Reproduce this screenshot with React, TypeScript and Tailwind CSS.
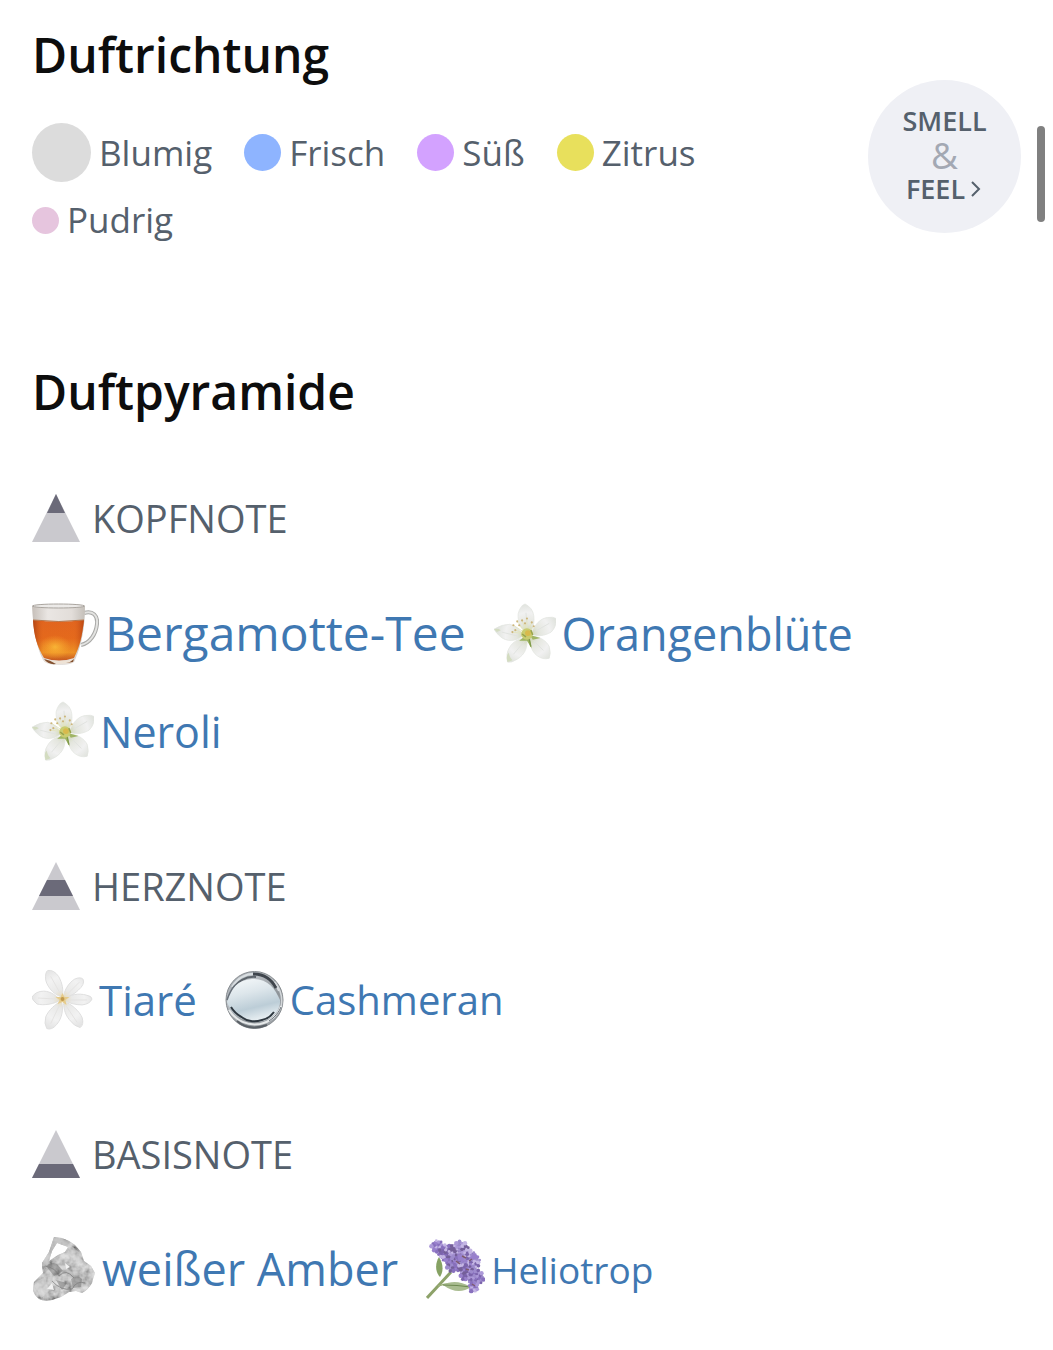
import React from 'react';

const accords = [
  { name: 'Blumig', dot: 'size-[59px] bg-[#dcdcdc]' },
  { name: 'Frisch', dot: 'size-[37px] bg-[#8eb4ff]' },
  { name: 'Süß', dot: 'size-[37px] bg-[#d3a2ff]' },
  { name: 'Zitrus', dot: 'size-[37px] bg-[#e8e05c]' },
  { name: 'Pudrig', dot: 'size-[27px] bg-[#e6c5de]' },
];

const TeaIcon = () => (
  <svg width="67" height="64" viewBox="0 0 67 64" className="shrink-0" aria-hidden="true">
    <defs>
      <linearGradient id="tea" x1="0" y1="0" x2="0" y2="1">
        <stop offset="0" stopColor="#e2651f" />
        <stop offset="0.45" stopColor="#e56a1c" />
        <stop offset="0.8" stopColor="#ee9426" />
        <stop offset="1" stopColor="#c4561f" />
      </linearGradient>
      <linearGradient id="teaSide" x1="0" x2="1">
        <stop offset="0" stopColor="#9c3510" stopOpacity="0.7" />
        <stop offset="0.2" stopColor="#d9601c" stopOpacity="0.1" />
        <stop offset="0.8" stopColor="#d9601c" stopOpacity="0.05" />
        <stop offset="1" stopColor="#a8380e" stopOpacity="0.7" />
      </linearGradient>
      <radialGradient id="teaGlow">
        <stop offset="0" stopColor="#ffc83c" />
        <stop offset="1" stopColor="#ffb030" stopOpacity="0" />
      </radialGradient>
      <linearGradient id="glass" x1="0" x2="1">
        <stop offset="0" stopColor="#c6bfb9" />
        <stop offset="0.3" stopColor="#eae6e3" />
        <stop offset="0.75" stopColor="#e2ddd9" />
        <stop offset="1" stopColor="#c4bfb9" />
      </linearGradient>
    </defs>
    <path d="M52 12 C61 9 66 15 65 23 C64 33 58 42 49 44" fill="none" stroke="#a9a9a7" strokeWidth="4" />
    <path d="M52 12 C61 9 66 15 65 23 C64 33 58 42 49 44" fill="none" stroke="#e3e3e1" strokeWidth="2" />
    <path d="M0 5 L53 5 C53 25 50 43 43 59 Q42 64 27 64 Q13 64 11 59 C4 45 1 25 0 5Z" fill="url(#glass)" />
    <path d="M1 19 Q27 22 52 19 C50 35 48 45 42 57 Q27 62 12 57 C5 45 2 35 1 19Z" fill="url(#tea)" />
    <ellipse cx="23" cy="46" rx="16" ry="12" fill="url(#teaGlow)" opacity="0.8" />
    <path d="M1 19 Q27 22 52 19 C50 35 48 45 42 57 Q27 62 12 57 C5 45 2 35 1 19Z" fill="url(#teaSide)" />
    <path d="M12 58 Q27 62 42 58 L41 61 Q27 65 13 61Z" fill="#eee3d6" />
    <path d="M12 58 Q18 59 24 63 Q16 64 12 58Z" fill="#83502f" />
    <path d="M34 62 Q39 61 42 58 L41 61Z" fill="#83502f" />
    <ellipse cx="26.5" cy="5" rx="26" ry="2" fill="#eceae8" stroke="#aaa59f" strokeWidth="1" />
    <path d="M1 19 Q27 22 52 19" fill="none" stroke="#b5784e" strokeWidth="1" />
  </svg>
);

const blossomPetals = [
  'M36 31 C28 27 24 18 25 10 Q27 2 32 0 Q40 4 41 12 C42 20 40 27 36 31Z',
  'M38 31 C42 21 48 15 55 14 Q61 13 64 15 Q65 23 59 29 C52 33 45 34 38 31Z',
  'M30 33 C22 39 13 39 7 34 Q2 30 0 26 Q8 21 16 21 C24 23 28 28 30 33Z',
  'M34 35 C35 45 32 52 24 57 Q18 61 14 60 Q12 51 16 45 C20 38 27 35 34 35Z',
  'M37 33 C47 33 54 38 57 44 Q59 51 57 56 Q50 58 44 53 C38 48 37 41 37 33Z',
];

const stamens = [[20, 22], [24, 18], [29, 17], [34, 15], [39, 19], [19, 29], [22, 27], [41, 23], [26, 22], [32, 20]];

const BlossomIcon = ({ id }: { id: string }) => (
  <svg width="62" height="62" viewBox="0 0 64 62" className="shrink-0" aria-hidden="true">
    <defs>
      <radialGradient id={id} gradientUnits="userSpaceOnUse" cx="35" cy="32" r="33">
        <stop offset="0" stopColor="#c6cfa2" />
        <stop offset="0.35" stopColor="#e4e6de" />
        <stop offset="0.7" stopColor="#f1f1f1" />
        <stop offset="1" stopColor="#dfe2dc" />
      </radialGradient>
    </defs>
    {blossomPetals.map((d) => (
      <path key={d} d={d} fill={`url(#${id})`} stroke="#e2e5e0" strokeWidth="0.8" />
    ))}
    <path d="M14 60 Q12 54 15 50 Q16 55 19 58Z M0 26 Q4 25 7 27 L3 29Z" fill="#d3dcc0" />
    <path d="M33 9 L34 24 M57 20 L43 28 M8 29 L24 33 M20 52 L31 39 M51 48 L41 38" stroke="#e0e2df" strokeWidth="1" fill="none" />
    <path d="M36 33 L39 46 L34 38 L26 38 L31 34Z M37 32 L48 35 L40 37Z" fill="#a0b565" />
    <path d="M36 34 L38 44" stroke="#7f9a48" strokeWidth="1.5" />
    {stamens.map(([x, y]) => (
      <g key={`${x}-${y}`}>
        <path d={`M34 31 L${x} ${y}`} stroke="#e4e5bd" strokeWidth="0.9" />
        <circle cx={x} cy={y} r="1.1" fill="#cdb67c" />
      </g>
    ))}
    <circle cx="34" cy="31" r="6" fill="#c9cc70" />
    <circle cx="35" cy="30" r="3" fill="#d8b94c" />
    <path d="M29 31 L33 34 M38 27 L40 32" stroke="#98a24c" strokeWidth="1.5" />
  </svg>
);

const tiarePetals = [
  'M31 28 C24 27 16 19 14 11 Q13 3 16 1 Q22 0 27 7 C31 14 32 21 31 28Z',
  'M32 29 C32 22 37 14 43 10 Q49 7 52 10 Q54 15 47 21 C42 26 37 28 32 29Z',
  'M32 31 C38 25 48 24 55 26 Q61 27 61 30 Q59 35 51 36 C44 36 37 34 32 31Z',
  'M32 32 C40 35 48 42 51 49 Q53 56 49 59 Q43 58 38 51 C33 45 32 38 32 32Z',
  'M30 32 C32 40 31 49 25 56 Q20 62 15 60 Q12 55 14 48 C17 41 24 35 30 32Z',
  'M29 31 C23 35 12 37 5 35 Q0 31 0 28 Q4 22 12 22 C19 22 25 27 29 31Z',
];

const TiareIcon = () => (
  <svg width="61" height="62" viewBox="0 0 62 62" className="shrink-0" aria-hidden="true">
    <defs>
      <radialGradient id="tiare" gradientUnits="userSpaceOnUse" cx="31" cy="30" r="32">
        <stop offset="0" stopColor="#e6d8ae" />
        <stop offset="0.3" stopColor="#e9e9e8" />
        <stop offset="0.7" stopColor="#f2f2f2" />
        <stop offset="1" stopColor="#e4e4e4" />
      </radialGradient>
    </defs>
    {tiarePetals.map((d) => (
      <path key={d} d={d} fill="url(#tiare)" stroke="#dedede" strokeWidth="1" />
    ))}
    <path
      d="M19 7 L29 25 M48 13 L35 26 M56 31 L37 31 M46 54 L34 36 M19 55 L28 36 M6 29 L25 30"
      stroke="#e3e2e1"
      strokeWidth="1"
    />
    <path d="M31 24 L33 28 L38 28 L34 31 L35 36 L31 33 L26 35 L28 31 L24 28 L29 28Z" fill="#e6cc8c" />
    <circle cx="31" cy="30" r="2" fill="#c29a4c" />
  </svg>
);

const BubbleIcon = () => (
  <svg width="59" height="62" viewBox="0 0 59 62" className="shrink-0" aria-hidden="true">
    <defs>
      <linearGradient id="bubbleRing" x1="0" y1="0" x2="1" y2="1">
        <stop offset="0" stopColor="#9da3a9" />
        <stop offset="0.3" stopColor="#b9bec3" />
        <stop offset="0.65" stopColor="#8e9499" />
        <stop offset="1" stopColor="#a9adb1" />
      </linearGradient>
      <linearGradient id="bubbleCore" x1="0" y1="0" x2="0.3" y2="1">
        <stop offset="0" stopColor="#f7fafb" />
        <stop offset="0.4" stopColor="#dde6eb" />
        <stop offset="0.75" stopColor="#bccdd7" />
        <stop offset="1" stopColor="#e3ebef" />
      </linearGradient>
    </defs>
    <circle cx="29.5" cy="31" r="28.5" fill="url(#bubbleRing)" stroke="#878c90" strokeWidth="1" />
    <path d="M7 18 C14 7 23 4 33 5 C43 7 51 13 54 22" fill="none" stroke="#d9dee1" strokeWidth="2" />
    <path d="M7 22 C12 12 21 7 31 8" fill="none" stroke="#5d646b" strokeWidth="2" />
    <path d="M28 5 C39 5 46 9 51 19" fill="none" stroke="#3f454c" strokeWidth="3" />
    <path d="M50 13 C56 21 58 29 56 38" fill="none" stroke="#d3d7da" strokeWidth="1.5" />
    <path d="M2 33 C5 19 13 11 27 10 C42 9 50 19 55 31 C56 43 45 52 33 53 C18 53 7 46 2 33Z" fill="url(#bubbleCore)" />
    <path d="M6 38 C10 45 15 47 18 49 C23 53 31 53 37 51 C43 50 46 47 49 43" fill="none" stroke="#2f3840" strokeWidth="2" />
    <path d="M4 41 C11 52 23 57 35 55 C45 53 53 46 56 37" fill="none" stroke="#e6e9ea" strokeWidth="2" />
    <path d="M12 52 C20 59 31 60 42 56" fill="none" stroke="#5b6167" strokeWidth="2" />
    <path d="M44 52 C50 48 54 43 56 38" fill="none" stroke="#687078" strokeWidth="1" />
    <path d="M2 31 Q5 22 10 16" fill="none" stroke="#69717a" strokeWidth="1.5" />
  </svg>
);

const AmberIcon = () => (
  <svg width="64" height="64" viewBox="0 0 64 64" className="shrink-0" aria-hidden="true">
    <defs>
      <filter id="rock" x="0" y="0" width="100%" height="100%">
        <feTurbulence type="fractalNoise" baseFrequency="0.12" numOctaves="3" seed="8" />
        <feColorMatrix values="1.8 0 0 0 -0.3  1.8 0 0 0 -0.3  1.8 0 0 0 -0.3  0 0 0 0 1" />
      </filter>
      <clipPath id="rockShape">
        <path
          clipRule="evenodd"
          d="M22 0 L30 1 L37 4 L43 8 L49 15 L52 24 L59 29 L63 36 L61 42 L60 46 Q56 53 50 56 L44 54 L37 55 L29 60 L20 63 Q12 65 7 62 Q2 58 1 53 L2 45 L11 36 L10 26 L17 15Z M25 6 L36 10 L33 15 L26 18 L17 24 L20 14Z"
        />
      </clipPath>
    </defs>
    <g clipPath="url(#rockShape)">
      <rect width="64" height="64" fill="#bcbcbc" />
      <rect width="64" height="64" filter="url(#rock)" opacity="0.5" />
      <path d="M22 0 L37 4 L36 10 L25 6 L20 14 L17 24 L11 36 L10 26Z" fill="#c4c4c4" opacity="0.6" />
      <path d="M38 8 L48 16 L51 28 L42 22 L35 17Z M2 46 L13 40 L17 54 L9 61Z" fill="#d8d8d8" opacity="0.45" />
      <path d="M14 29 Q20 24 25 27 L31 34 L22 39Z M39 42 Q46 37 50 42 L49 50 L41 51Z M24 43 L35 46 L30 53Z" fill="#5f5f5f" opacity="0.4" />
      <path d="M20 46 L22 53 L15 52Z M33 26 L38 30 L34 32Z" fill="#f2f2f2" />
      <path d="M13 29 Q24 31 27 39 Q34 31 42 41 M20 44 Q29 54 40 52 Q45 43 53 46" stroke="#7b7b7b" strokeWidth="1" fill="none" opacity="0.7" />
    </g>
  </svg>
);

const clusters = [
  { x: 11, y: 7, r: 6, n: 20 },
  { x: 21, y: 14, r: 9, n: 30 },
  { x: 34, y: 13, r: 11, n: 46 },
  { x: 28, y: 24, r: 9, n: 32 },
  { x: 43, y: 23, r: 11, n: 50 },
  { x: 41, y: 34, r: 8, n: 28 },
  { x: 50, y: 39, r: 8, n: 32 },
  { x: 47, y: 48, r: 5, n: 14 },
];

const purples = ['#9880cc', '#7b64ab', '#ac99d8', '#8870bd', '#c4b6e4', '#745f98', '#9d8bcc'];

// golden angle spread keeps the florets even inside each cluster
const florets = clusters.flatMap((c, k) =>
  Array.from({ length: c.n }, (_, i) => {
    const dist = c.r * Math.sqrt((i + 0.5) / c.n);
    const angle = i * 2.4 + k;
    return {
      x: c.x + dist * Math.cos(angle),
      y: c.y + dist * Math.sin(angle),
      r: 1.4 + (i % 3) * 0.4,
      fill: purples[(i * i * 3 + i + k) % purples.length],
    };
  })
);

const HeliotropeIcon = () => (
  <svg width="59" height="62" viewBox="0 0 59 62" className="shrink-0" aria-hidden="true">
    <path d="M1 59 L13 46 L25 33" stroke="#8da269" strokeWidth="3" fill="none" />
    <path d="M12 47 Q25 42 41 47" stroke="#9bae7a" strokeWidth="1.5" fill="none" />
    <path d="M13 18 C9 24 9 33 14 38 C18 32 17 24 13 18Z" fill="#86a263" />
    <path d="M17 46 Q29 39 45 48 Q32 57 17 46Z" fill="#a9bc90" />
    <path d="M17 46 Q31 46 45 48" stroke="#6e8a50" strokeWidth="1" fill="none" />
    {clusters.map((c) => (
      <circle key={`${c.x}-${c.y}`} cx={c.x} cy={c.y} r={c.r - 1} fill="#8069b0" />
    ))}
    {florets.map((f, i) => (
      <circle key={i} cx={f.x} cy={f.y} r={f.r} fill={f.fill} />
    ))}
    <path d="M36 17 l4 2 M43 22 l3 -2 M30 22 l4 3 M40 30 l3 1 M46 45 l3 2" stroke="#7d5a6c" strokeWidth="1.5" />
  </svg>
);

type Level = 'top' | 'middle' | 'base';

const levelPaths: Record<Level, string> = {
  top: 'M24 0 L33 19 L15 19Z',
  middle: 'M15 18 L33 18 L41 34 L7 34Z',
  base: 'M7 34 L41 34 L48 48 L0 48Z',
};

const PyramidIcon = ({ level }: { level: Level }) => (
  <svg width="48" height="48" viewBox="0 0 48 48" className="shrink-0" aria-hidden="true">
    <path d="M24 0 L48 48 L0 48Z" fill="#cac9ce" />
    <path d={levelPaths[level]} fill="#6b6a79" />
  </svg>
);

const pyramid: {
  title: string;
  level: Level;
  notes: { name: string; size: string; icon: React.ReactNode }[];
}[] = [
  {
    title: 'KOPFNOTE',
    level: 'top',
    notes: [
      { name: 'Bergamotte-Tee', size: 'text-[48px]', icon: <TeaIcon /> },
      { name: 'Orangenblüte', size: 'text-[45px]', icon: <BlossomIcon id="orange" /> },
      { name: 'Neroli', size: 'text-[43px]', icon: <BlossomIcon id="neroli" /> },
    ],
  },
  {
    title: 'HERZNOTE',
    level: 'middle',
    notes: [
      { name: 'Tiaré', size: 'text-[42px]', icon: <TiareIcon /> },
      { name: 'Cashmeran', size: 'text-[40px]', icon: <BubbleIcon /> },
    ],
  },
  {
    title: 'BASISNOTE',
    level: 'base',
    notes: [
      { name: 'weißer Amber', size: 'text-[45px]', icon: <AmberIcon /> },
      { name: 'Heliotrop', size: 'text-[37px]', icon: <HeliotropeIcon /> },
    ],
  },
];

const App = () => {
  return (
    <main className="relative min-h-screen bg-white px-8 pt-[23px] pb-12 font-['Open_Sans',sans-serif] text-[#55606c]">
      <section className="flex items-start justify-between">
        <div className="flex-1 pr-8">
          <h2 className="text-[48px] leading-[64px] font-semibold text-[#0d0d0d]">Duftrichtung</h2>
          <ul className="mt-9 flex flex-wrap items-center gap-x-8 gap-y-[14px]">
            {accords.map((accord) => (
              <li key={accord.name} className="flex items-center gap-2 text-[35px] leading-[48px]">
                <span className={`rounded-full shrink-0 ${accord.dot}`} />
                {accord.name}
              </li>
            ))}
          </ul>
        </div>
        <button className="mt-[57px] flex size-[153px] shrink-0 flex-col items-center justify-center rounded-full bg-[#eff0f5] pb-1 text-[27px] leading-[34px] font-semibold">
          <span>SMELL</span>
          <span className="text-[37px] font-normal text-[#a3a8b3]">&amp;</span>
          <span className="flex items-center">
            FEEL
            <svg width="18" height="24" viewBox="0 0 18 24" fill="none" aria-hidden="true">
              <path d="M7 5 L14 12 L7 19" stroke="#55606c" strokeWidth="2" />
            </svg>
          </span>
        </button>
      </section>

      <section className="mt-[116px]">
        <h2 className="text-[48px] leading-[64px] font-semibold text-[#0d0d0d]">Duftpyramide</h2>
        <div className="mt-[70px] space-y-[99px]">
          {pyramid.map((group) => (
            <div key={group.title}>
              <h3 className="flex items-center gap-3 text-[38px] leading-[48px]">
                <PyramidIcon level={group.level} />
                {group.title}
              </h3>
              <div className="mt-[59px] flex flex-wrap items-baseline gap-x-7 gap-y-9">
                {group.notes.map((note) => (
                  <a
                    key={note.name}
                    href="#"
                    className={`flex items-center gap-1.5 leading-[62px] text-[#3f78b2] ${note.size}`}
                  >
                    {note.icon}
                    <span>{note.name}</span>
                  </a>
                ))}
              </div>
            </div>
          ))}
        </div>
      </section>

      {/* scroll thumb */}
      <div className="absolute top-[126px] right-2 h-24 w-2 rounded-full bg-[#808080]" />
    </main>
  );
};

export default App;
